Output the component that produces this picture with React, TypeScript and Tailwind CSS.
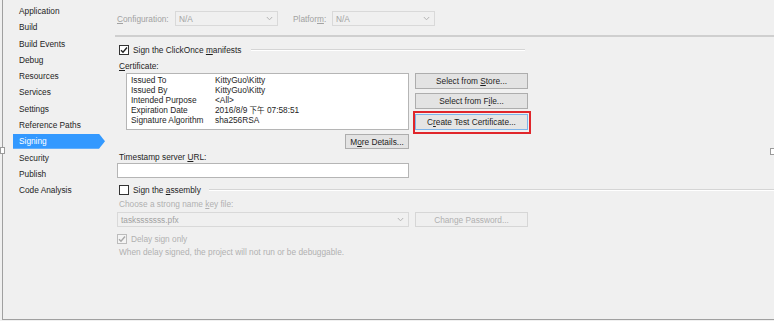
import React from "react";

const F = "font-['Liberation_Sans',Arial,sans-serif]";

function U({ children }: { children: React.ReactNode }) {
  return <span className="underline underline-offset-[1px] decoration-[0.5px]">{children}</span>;
}

function Chevron({ color = "#9a9a9a" }: { color?: string }) {
  return (
    <svg width="7" height="5" viewBox="0 0 7 5" className="shrink-0">
      <path d="M0.8 1 L3.5 3.8 L6.2 1" fill="none" stroke={color} strokeWidth="1" />
    </svg>
  );
}

function Check({ checked, disabled }: { checked: boolean; disabled?: boolean }) {
  return (
    <div
      className={`w-[10px] h-[10px] shrink-0 border flex items-center justify-center ${
        disabled ? "border-[#bcbcbc] bg-[#f4f4f4]" : "border-[#333333] bg-white"
      }`}
    >
      {checked && (
        <svg width="8" height="8" viewBox="0 0 8 8">
          <path
            d="M1 4.2 L3 6.2 L7 1.5"
            fill="none"
            stroke={disabled ? "#a8a8a8" : "#222222"}
            strokeWidth="1.4"
          />
        </svg>
      )}
    </div>
  );
}

function DisabledSelect({ text, w }: { text: string; w: string }) {
  return (
    <div className={`${w} h-[15px] border border-[#d9d9d9] bg-[#f0f0f0] flex items-center pl-[3px] pr-[4px] text-[#a2a2a2]`}>
      <span className="flex-1">{text}</span>
      <Chevron color="#b4b4b4" />
    </div>
  );
}

function Btn({ children, disabled, focused }: { children: React.ReactNode; disabled?: boolean; focused?: boolean }) {
  return (
    <div
      className={`w-[113px] h-[16px] flex items-center justify-center border ${
        disabled
          ? "border-[#d6d6d6] bg-[#efefef] text-[#a8a8a8]"
          : focused
          ? "border-[#7eb4ea] bg-[#e5e5e5] text-[#1e1e1e]"
          : "border-[#adadad] bg-[#e3e3e3] text-[#1e1e1e]"
      }`}
    >
      <span className="whitespace-pre">{children}</span>
    </div>
  );
}

const navItems = [
  "Application",
  "Build",
  "Build Events",
  "Debug",
  "Resources",
  "Services",
  "Settings",
  "Reference Paths",
  "Signing",
  "Security",
  "Publish",
  "Code Analysis",
];

const certRows: [string, React.ReactNode][] = [
  ["Issued To", "KittyGuo\\Kitty"],
  ["Issued By", "KittyGuo\\Kitty"],
  ["Intended Purpose", "<All>"],
  [
    "Expiration Date",
    <span>
      2016/8/9 <span className="font-['Noto_Sans_CJK_TC',sans-serif] text-[7.5px]">下午</span> 07:58:51
    </span>,
  ],
  ["Signature Algorithm", "sha256RSA"],
];

export default function App() {
  return (
    <div className={`relative w-[774px] h-[321px] bg-[#f0f0f0] overflow-hidden ${F} text-[8.3px] leading-[10px] text-[#1e1e1e]`}>
      {/* frame */}
      <div className="ml-[2px] h-[320px] border-l border-b border-[#a0a0a0] flex">
        {/* sidebar */}
        <div className="w-[112px] shrink-0 pt-[3px] pl-[10px]">
          {navItems.map((n) =>
            n === "Signing" ? (
              <div key={n} className="h-[16.27px] flex items-center">
                <div className="h-[15px] w-[92px] bg-[#3399ff] text-white pl-[6px] flex items-center [clip-path:polygon(0_0,86px_0,92px_50%,86px_100%,0_100%)]">
                  {n}
                </div>
              </div>
            ) : (
              <div key={n} className="h-[16.27px] flex items-center pl-[6px]">
                {n}
              </div>
            )
          )}
        </div>

        {/* main */}
        <div className="flex-1 flex flex-col pt-[11px]">
          <div className="flex items-center h-[15px] pl-[2px] text-[#a2a2a2]">
            <div className="w-[58px]">
              <U>C</U>onfiguration:
            </div>
            <DisabledSelect text="N/A" w="w-[103px]" />
            <div className="ml-[15px] w-[39px]">
              Platfor<U>m</U>:
            </div>
            <DisabledSelect text="N/A" w="w-[103px]" />
          </div>

          <div className="mt-[9px] h-[2px] bg-[#cfcfcf]" />

          <div className="mt-[8px] flex items-center h-[10px] pl-[4px] mr-[249px]">
            <Check checked />
            <div className="ml-[4px] whitespace-nowrap">
              Sign the ClickOnce <U>m</U>anifests
            </div>
            <div className="ml-[10px] flex-1 border-t border-b border-t-[#d5d5d5] border-b-white" />
          </div>

          <div className="mt-[6px] h-[10px] pl-[4px]">
            <U>C</U>ertificate:
          </div>

          <div className="mt-[2px] flex pl-[11px]">
            <div className="w-[283px] h-[57px] bg-white border border-[#b5b5b5] pl-[4px] pt-[1px]">
              {certRows.map(([k, v]) => (
                <div key={k} className="flex h-[10px] items-center">
                  <div className="w-[84px]">{k}</div>
                  <div>{v}</div>
                </div>
              ))}
            </div>
            <div className="ml-[6px] flex flex-col">
              <Btn>
                Select from <U>S</U>tore...
              </Btn>
              <div className="mt-[4px]">
                <Btn>
                  Select from F<U>i</U>le...
                </Btn>
              </div>
              <div className="mt-[5px] relative">
                <Btn focused>
                  C<U>r</U>eate Test Certificate...
                </Btn>
                <div className="absolute left-[-2px] right-[-3px] top-[-3px] bottom-[-4px] border-2 border-[#e0262b]" />
              </div>
            </div>
          </div>

          <div className="mt-[4px] pl-[230px]">
            <div className="w-[64px] h-[15px] border border-[#adadad] bg-[#e3e3e3] flex items-center justify-center">
              <span>
                M<U>o</U>re Details...
              </span>
            </div>
          </div>

          <div className="mt-[3px] h-[10px] pl-[4px]">
            Timestamp server <U>U</U>RL:
          </div>
          <div className="mt-[1px] ml-[2px] w-[292px] h-[15px] bg-white border border-[#b5b5b5]" />

          <div className="mt-[7px] flex items-center h-[10px] pl-[4px]">
            <Check checked={false} />
            <div className="ml-[4px] whitespace-nowrap">
              Sign the <U>a</U>ssembly
            </div>
            <div className="ml-[8px] flex-1 border-t border-b border-t-[#d5d5d5] border-b-white" />
          </div>

          <div className="mt-[4px] h-[10px] pl-[4px] text-[#b0b0b0]">
            Choose a strong name <U>k</U>ey file:
          </div>

          <div className="mt-[3px] flex pl-[2px]">
            <DisabledSelect text="tasksssssss.pfx" w="w-[292px]" />
            <div className="ml-[6px] w-[113px] h-[15px] border border-[#d6d6d6] bg-[#efefef] text-[#b0b0b0] flex items-center justify-center">
              Change Password...
            </div>
          </div>

          <div className="mt-[7px] flex items-center h-[10px] pl-[2px] text-[#b0b0b0]">
            <Check checked disabled />
            <div className="ml-[4px]">Delay sign only</div>
          </div>

          <div className="mt-[3px] h-[10px] pl-[4px] text-[#b0b0b0]">
            When delay signed, the project will not run or be debuggable.
          </div>
        </div>
      </div>

      {/* resize handles */}
      <div className="absolute left-0 top-[147px] w-[5px] h-[7px] bg-white border border-[#9a9a9a]" />
      <div className="absolute right-0 top-[148px] w-[4px] h-[7px] bg-white border border-[#9a9a9a] border-r-0" />
    </div>
  );
}
